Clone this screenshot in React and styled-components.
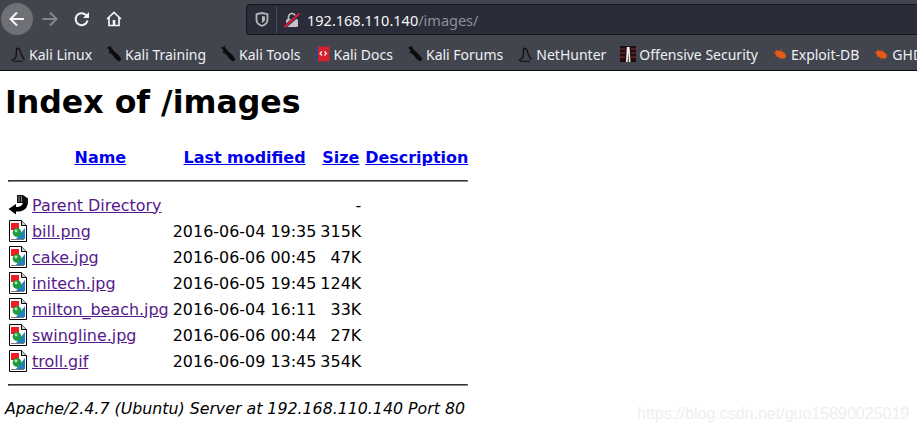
import React from "react";
import styled, { createGlobalStyle } from "styled-components";

const Global = createGlobalStyle`
  html, body { margin: 0; padding: 0; background: #fff; }
  body { width: 917px; height: 433px; overflow: hidden; font-family: "DejaVu Sans", sans-serif; }
`;

const BOOKMARKS = [
  { label: "Kali Linux", icon: "hunter" },
  { label: "Kali Training", icon: "dragon" },
  { label: "Kali Tools", icon: "dragon" },
  { label: "Kali Docs", icon: "docs" },
  { label: "Kali Forums", icon: "dragon" },
  { label: "NetHunter", icon: "hunter" },
  { label: "Offensive Security", icon: "offsec" },
  { label: "Exploit-DB", icon: "bug" },
  { label: "GHDB", icon: "bug" }
];

const FILES = [
  ["bill.png", "2016-06-04 19:35", "315K"],
  ["cake.jpg", "2016-06-06 00:45", "47K"],
  ["initech.jpg", "2016-06-05 19:45", "124K"],
  ["milton_beach.jpg", "2016-06-04 16:11", "33K"],
  ["swingline.jpg", "2016-06-06 00:44", "27K"],
  ["troll.gif", "2016-06-09 13:45", "354K"]
];

const BackIcon = () => (
  <svg width="18" height="18" viewBox="0 0 18 18" fill="none" stroke="#f4f4f6" strokeWidth="2">
    <path d="M16 9H2.5M9 2.5L2.5 9L9 15.5" />
  </svg>
);

const ForwardIcon = () => (
  <svg width="18" height="18" viewBox="0 0 18 18" fill="none" stroke="#85868c" strokeWidth="2">
    <path d="M1.5 9H15M9 2.5L15.5 9L9 15.5" />
  </svg>
);

const ReloadIcon = () => (
  <svg width="16" height="16" viewBox="0 0 16 16" fill="none" stroke="#f4f4f6" strokeWidth="2">
    <path d="M13.5 9.5A6 6 0 1 1 12 4L14.5 6.2" />
    <path d="M15 1V7H9" fill="#f4f4f6" stroke="none" />
  </svg>
);

const HomeIcon = () => (
  <svg width="16" height="16" viewBox="0 0 16 16" fill="none" stroke="#f4f4f6" strokeWidth="1.7">
    <path d="M1 8L8 1.5L15 8M3 6.5V14.5H13V6.5" />
    <rect x="6.7" y="9" width="2.6" height="5" fill="#f4f4f6" stroke="none" />
  </svg>
);

const ShieldIcon = () => (
  <svg width="14" height="15" viewBox="0 0 14 15" fill="none" stroke="#b4b4b9" strokeWidth="1.8">
    <path d="M1.5 2.2L7 1L12.5 2.2V8C12.5 11 9.5 13 7 14C4.5 13 1.5 11 1.5 8Z" />
    <path d="M7 4V11C8.5 10 10 9 10 7.5V4.5Z" fill="#b4b4b9" stroke="none" />
  </svg>
);

const BrokenLockIcon = () => (
  <svg width="16" height="16" viewBox="0 0 16 16" fill="none">
    <path d="M4.5 7V5A3.5 3.5 0 0 1 11.5 5V7" stroke="#c4c4c8" strokeWidth="1.6" />
    <rect x="2" y="7" width="12" height="8" rx="1.5" fill="#c4c4c8" />
    <path d="M0.5 15L15.5 2" stroke="#2a2d39" strokeWidth="3.4" />
    <path d="M0.5 15L15.5 1.5" stroke="#e8183f" strokeWidth="1.8" />
  </svg>
);

const BookmarkIcon = ({ kind }) => {
  if (kind === "docs") {
    return (
      <svg width="15" height="16" viewBox="0 0 15 16">
        <rect x="0.5" y="0.5" width="14" height="15" rx="1" fill="#d3222c" />
        <rect x="0.5" y="0.5" width="2.5" height="15" fill="#24487c" />
        <path d="M7 5.5L5 7.5L7 9.5M9.5 5.5L11.5 7.5L9.5 9.5" fill="none" stroke="#fff" strokeWidth="1.1" />
      </svg>
    );
  }
  if (kind === "offsec") {
    return (
      <svg width="16" height="16" viewBox="0 0 16 16">
        <rect width="16" height="16" fill="#240d0e" />
        <path d="M0 3H5M11 3H16M0 7H5M11 7H16M0 11H5M11 11H16" stroke="#7a3432" strokeWidth="1" />
        <path d="M6 16L6.8 1H9.6L10.5 16H8.8L8.3 6L7.7 16Z" fill="#f2f2f2" />
      </svg>
    );
  }
  if (kind === "bug") {
    return (
      <svg width="16" height="14" viewBox="0 0 16 14">
        <ellipse cx="8.5" cy="7.5" rx="6" ry="3.4" fill="#e65a17" transform="rotate(28 8.5 7.5)" />
        <path d="M1 5.5H5M3.5 2.5L7 5M9.5 2L9.5 4M2.5 10L6 8.5M7.5 13L8.2 10.5M12 12.5L11 10.5" stroke="#e65a17" strokeWidth="0.7" opacity="0.6" />
      </svg>
    );
  }
  if (kind === "dragon") {
    return (
      <svg width="16" height="16" viewBox="0 0 16 16">
        <path d="M0.5 1.5L4.5 1L8.5 5.5L12.5 9L15.5 13.5L13 15.5L9.5 13L7 9.5L3.5 6.5L3 3.5Z" fill="#0c0c0e" />
        <path d="M3 1L5.5 0.5M5 5.5L2.5 7" stroke="#0c0c0e" strokeWidth="1" />
      </svg>
    );
  }
  return (
    <svg width="16" height="16" viewBox="0 0 16 16" fill="none" stroke="#0e0e10" strokeWidth="1.3">
      <path d="M1.5 14.5C4 13.5 5 12.8 6 11C6.5 8 6 6 6.5 3.5C7 1.5 9 2 9.8 4C11 7.5 12 11 14.5 13.5" />
      <path d="M3 15.2H13" strokeWidth="1" />
    </svg>
  );
};

const ImageFileIcon = () => (
  <svg width="20" height="22" viewBox="0 0 20 22">
    <path d="M1.5 0.5H13.5L18.5 5.5V21.5H1.5Z" fill="#fff" stroke="#000" />
    <path d="M13.5 0.5V5.5H18.5" fill="#ccc" stroke="#000" />
    <rect x="3" y="3" width="8" height="7" fill="#f01c24" />
    <path d="M17 8V19H8Z" fill="#1f7fc0" />
    <circle cx="9" cy="12.5" r="4.4" fill="#1c9c3c" />
    <circle cx="8" cy="11" r="1.4" fill="#b8e8c0" />
    <path d="M3 19.5H16" stroke="#777" />
  </svg>
);

const ParentIcon = () => (
  <svg width="20" height="22" viewBox="0 0 20 22">
    <path d="M0.5 15L8 10V13C12 13 14.5 12 15 8L20 8C19.5 15 15 18 8 17.5V20.5Z" fill="#000" />
    <path d="M9 1H15L20 4.5V9H9Z" fill="#111" />
    <path d="M11 2V8M13.5 2V8" stroke="#999" strokeWidth="0.9" />
  </svg>
);

export default function App() {
  return (
    <>
      <Global />
      <Browser>
        <Toolbar>
          <BackButton><BackIcon /></BackButton>
          <NavButton><ForwardIcon /></NavButton>
          <NavButton><ReloadIcon /></NavButton>
          <NavButton><HomeIcon /></NavButton>
          <UrlBar>
            <ShieldSlot><ShieldIcon /></ShieldSlot>
            <UrlDivider />
            <BrokenLockIcon />
            <UrlText>192.168.110.140<UrlPath>/images/</UrlPath></UrlText>
          </UrlBar>
        </Toolbar>
        <Bookmarks>
          {BOOKMARKS.map(b => (
            <Bookmark key={b.label}>
              <BookmarkIconSlot><BookmarkIcon kind={b.icon} /></BookmarkIconSlot>
              {b.label}
            </Bookmark>
          ))}
        </Bookmarks>
      </Browser>
      <Page>
        <Heading>Index of /images</Heading>
        <Listing>
          <tbody>
            <tr>
              <HeadCell />
              <HeadCell><Link href="#">Name</Link></HeadCell>
              <HeadCell><Link href="#">Last modified</Link></HeadCell>
              <HeadCell><Link href="#">Size</Link></HeadCell>
              <HeadCell><Link href="#">Description</Link></HeadCell>
            </tr>
            <tr><RuleCell colSpan="5"><Rule /></RuleCell></tr>
            <tr>
              <IconCell><ParentIcon /></IconCell>
              <Cell><Visited href="#">Parent Directory</Visited></Cell>
              <Cell />
              <SizeCell>- </SizeCell>
              <Cell />
            </tr>
            {FILES.map(([name, date, size]) => (
              <tr key={name}>
                <IconCell><ImageFileIcon /></IconCell>
                <Cell><Visited href="#">{name}</Visited></Cell>
                <DateCell>{date}</DateCell>
                <SizeCell>{size}</SizeCell>
                <Cell />
              </tr>
            ))}
            <tr><RuleCell colSpan="5"><Rule /></RuleCell></tr>
          </tbody>
        </Listing>
        <Footer>Apache/2.4.7 (Ubuntu) Server at 192.168.110.140 Port 80</Footer>
      </Page>
      <Watermark>https://blog.csdn.net/guo15890025019</Watermark>
    </>
  );
}

const Browser = styled.header`
  background: #42454e;
  height: 71px;
  box-sizing: border-box;
  border-bottom: 1px solid #0c0c0d;
  overflow: hidden;
`;

const Toolbar = styled.div`
  height: 38px;
  display: flex;
  align-items: center;
  padding-left: 1px;
`;

const NavButton = styled.div`
  width: 32px;
  height: 32px;
  display: flex;
  align-items: center;
  justify-content: center;
  flex-shrink: 0;
`;

const BackButton = styled(NavButton)`
  background: #6f7177;
  border-radius: 50%;
  margin-right: 1px;
`;

const UrlBar = styled.div`
  margin-left: 116px;
  flex: 1;
  height: 29px;
  margin-top: 1px;
  display: flex;
  align-items: center;
  background: #2a2d39;
  border: 1px solid #15161b;
  border-right: none;
  border-radius: 4px 0 0 4px;
`;

const ShieldSlot = styled.div`
  display: flex;
  padding: 0 7px 0 8px;
`;

const UrlDivider = styled.div`
  width: 1px;
  height: 26px;
  background: #4a4c55;
  margin-right: 7px;
`;

const UrlText = styled.div`
  margin-left: 7px;
  color: #f7f7fa;
  font-family: "Noto Sans", sans-serif;
  font-size: 14.5px;
`;

const UrlPath = styled.span`
  color: #8d8f96;
`;

const Bookmarks = styled.nav`
  height: 32px;
  display: flex;
  align-items: center;
  padding-left: 10px;
  gap: 14px;
  white-space: nowrap;
`;

const Bookmark = styled.div`
  display: flex;
  align-items: center;
  gap: 3px;
  color: #eef0f4;
  font-family: "Noto Sans", sans-serif;
  font-size: 14px;
`;

const BookmarkIconSlot = styled.span`
  width: 16px;
  height: 16px;
  display: flex;
  align-items: center;
  justify-content: center;
`;

const Page = styled.main`
  padding: 0 0 0 5px;
  color: #000;
  font-size: 15.95px;
`;

const Heading = styled.h1`
  margin: 11px 0 0;
  font-size: 31.6px;
  line-height: 40px;
  font-weight: bold;
`;

const Listing = styled.table`
  margin-top: 21px;
  border-spacing: 2px;
  border-collapse: separate;
`;

const HeadCell = styled.th`
  padding: 1px;
  height: 22px;
  font-size: 15.95px;
  text-align: center;
`;

const Cell = styled.td`
  padding: 1px;
  height: 22px;
  white-space: nowrap;
`;

const IconCell = styled(Cell)`
  width: 20px;
  vertical-align: top;
  line-height: 0;
`;

const DateCell = styled(Cell)`
  text-align: right;
`;

const SizeCell = styled(Cell)`
  text-align: right;
`;

const RuleCell = styled.th`
  padding: 1px;
`;

const Rule = styled.hr`
  margin: 8px 0;
  border: 1px inset #888;
`;

const Link = styled.a`
  color: #0000ee;
`;

const Visited = styled.a`
  color: #551a8b;
`;

const Footer = styled.address`
  margin-top: 2px;
  font-size: 15.8px;
  font-style: italic;
`;

const Watermark = styled.div`
  position: absolute;
  left: 637px;
  top: 405px;
  font-family: "Liberation Sans", sans-serif;
  font-size: 16px;
  color: #eeeeee;
`;
